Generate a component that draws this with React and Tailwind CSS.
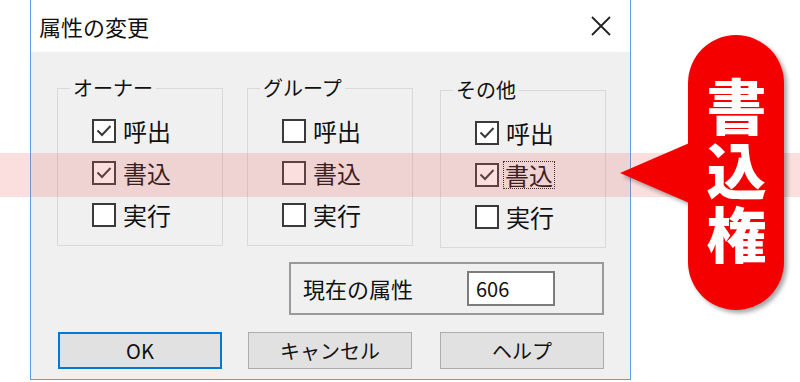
import React from 'react';

const font = { fontFamily: '"Noto Sans CJK JP", "Noto Sans", sans-serif' };

function Box({ checked }) {
    return (
        <span className="w-[24px] h-[24px] border-2 border-[#3a3a3a] bg-white flex items-center justify-center shrink-0">
            {checked && (
                <svg width="18" height="18" viewBox="0 0 18 18">
                    <polyline points="2.5,8.5 7,13 15.5,4" fill="none" stroke="#3a3a3a" strokeWidth="2" />
                </svg>
            )}
        </span>
    );
}

function Row({ checked, label, focus }) {
    return (
        <div className="h-[42px] flex items-center">
            <Box checked={checked} />
            <span className={focus ? 'ml-[5px] px-[1px] leading-[26px] outline outline-1 outline-dotted outline-[#222]' : 'ml-[7px]'}>
                {label}
            </span>
        </div>
    );
}

function Group({ title, rows, className = '' }) {
    return (
        <fieldset className={`w-[166px] h-[169px] border border-[#d9d9d9] ${className}`}>
            <legend className="ml-[12px] px-[3px] text-[20px] leading-[22px]">{title}</legend>
            <div className="pt-[11px] pl-[34px] text-[24px]">
                {rows.map((r) => <Row key={r.label} {...r} />)}
            </div>
        </fieldset>
    );
}

export default function App() {
    return (
        <div className="relative w-[800px] h-[382px] bg-white overflow-hidden text-[#111]" style={font}>
            {/* dialog */}
            <div className="ml-[30px] w-[601px] h-[380px] border-x border-b border-[#5aa0e6] bg-[#f0f0f0] flex flex-col">
                <div className="h-[52px] bg-white flex items-center justify-between pl-[8px] pr-[18px]">
                    <span className="text-[22px] leading-none">属性の変更</span>
                    <svg width="22" height="22" viewBox="0 0 22 22">
                        <path d="M2 2 L20 20 M20 2 L2 20" stroke="#222" strokeWidth="1.8" />
                    </svg>
                </div>

                <div className="pt-[25px] pl-[26px]">
                    <div className="flex items-start">
                        <Group
                            title="オーナー"
                            rows={[
                                { checked: true, label: '呼出' },
                                { checked: true, label: '書込' },
                                { checked: false, label: '実行' },
                            ]}
                        />
                        <Group
                            title="グループ"
                            className="ml-[24px]"
                            rows={[
                                { checked: false, label: '呼出' },
                                { checked: false, label: '書込' },
                                { checked: false, label: '実行' },
                            ]}
                        />
                        <Group
                            title="その他"
                            className="ml-[27px] mt-[2px]"
                            rows={[
                                { checked: true, label: '呼出' },
                                { checked: true, label: '書込', focus: true },
                                { checked: false, label: '実行' },
                            ]}
                        />
                    </div>

                    <div className="mt-[14px] flex justify-end pr-[26px]">
                        <div className="w-[315px] h-[53px] border-2 border-[#9a9a9a] flex items-center pl-[12px]">
                            <span className="text-[22px]">現在の属性</span>
                            <div className="ml-auto mr-[47px] w-[88px] h-[35px] border-2 border-[#7c7c7c] bg-white flex items-center pl-[7px] text-[20px]">
                                606
                            </div>
                        </div>
                    </div>

                    <div className="mt-[17px] flex text-[20px]">
                        <button className="ml-[1px] w-[164px] h-[37px] bg-[#e1e1e1] border-2 border-[#0078d7]">OK</button>
                        <button className="ml-[26px] w-[164px] h-[37px] bg-[#e1e1e1] border border-[#adadad]">キャンセル</button>
                        <button className="ml-[28px] w-[164px] h-[37px] bg-[#e1e1e1] border border-[#adadad]">ヘルプ</button>
                    </div>
                </div>
            </div>

            {/* highlight band */}
            <div className="absolute left-0 right-0 top-[153px] h-[44px] bg-[rgba(235,90,90,0.2)]" />

            {/* callout */}
            <div className="absolute left-[618px] top-[35px] w-[172px] h-[280px] drop-shadow-[3px_3px_2px_rgba(0,0,0,0.35)]">
                <svg className="absolute left-0 top-0" width="80" height="280" viewBox="0 0 80 280">
                    <polygon points="2,138 76,106 76,170" fill="#f50000" />
                </svg>
                <div className="absolute left-[70px] top-0 w-[96px] h-[275px] rounded-full bg-[#f50000] flex items-center justify-center">
                    <span className="[writing-mode:vertical-rl] text-white font-black text-[60px] leading-[64px] tracking-[4px]">
                        書込権
                    </span>
                </div>
            </div>
        </div>
    );
}
